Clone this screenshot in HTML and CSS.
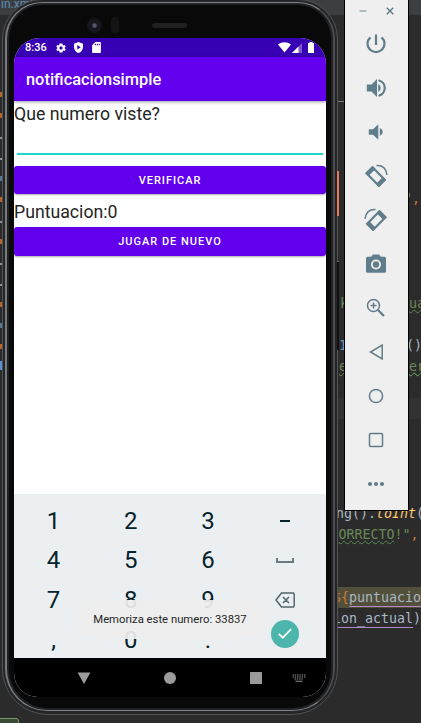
FILE: index.html
```html
<!DOCTYPE html>
<html lang="es">
<head>
<meta charset="utf-8">
<title>Emulador</title>
<link rel="stylesheet" href="styles.css">
</head>
<body>
<main class="desktop">
  <section class="editor">
    <div class="tabs">in.xml</div>
    <div class="code">
      <div class="gutter">
        <i class="o"></i><i class="o"></i><i></i><i></i><i class="b"></i><i class="o"></i><i></i><i class="o"></i><i></i><i></i><i class="o"></i><i class="b"></i><i class="o"></i><i class="sel"></i>
      </div>
      <div class="lines">
        <div class="line l-a">_<b>Le</b></div>
        <div class="line"></div><div class="line"></div><div class="line"></div><div class="line"></div>
        <div class="line l-b"><span class="g">"</span><span class="o">,</span></div>
        <div class="line"></div><div class="line"></div><div class="line"></div><div class="line"></div>
        <div class="line l-c g">k<span class="far wavy">ua</span></div>
        <div class="line"></div>
        <div class="line l-d"><span class="b">1</span><span class="far-d">()</span></div>
        <div class="line l-e g wavy">e<span class="far-e wavy">ere</span></div>
        <div class="line"></div>
        <div class="line current"></div>
        <div class="line"></div><div class="line"></div><div class="line"></div><div class="line"></div>
        <div class="line l-f">ng().<em>toInt</em>(</div>
        <div class="line l-g"><span class="g wavy">ORRECTO</span><span class="g">!"</span><span class="o">,</span></div>
        <div class="line"></div><div class="line"></div>
        <div class="line l-h"><span class="o">${</span><u>puntuacio</u></div>
        <div class="line l-i"><u>ion_actual</u>)</div>
      </div>
    </div>
    <div class="badge"></div>
  </section>

  <section class="phone">
    <div class="side power"></div>
    <div class="side volume"></div>
    <div class="bezel">
      <div class="hardware"><span class="camera"></span><span class="sensor"></span><span class="speaker"></span></div>
      <div class="screen">
        <div class="status">
          <span class="time">8:36</span>
          <svg class="s-gear" viewBox="2 2 20 20"><path fill-rule="evenodd" d="M19.4 13a7.500 7.500 0 0 0 0-2l2.100-1.600-2-3.500-2.500 1a8 8 0 0 0-1.700-1L15 3.200H9L8.700 5.900a8 8 0 0 0-1.700 1l-2.500-1-2 3.500L4.600 11a7.500 7.500 0 0 0 0 2l-2.100 1.600 2 3.500 2.500-1a8 8 0 0 0 1.700 1l.3 2.700h6l.3-2.700a8 8 0 0 0 1.700-1l2.500 1 2-3.500zM12 15.300a3.300 3.300 0 1 1 0-6.600 3.300 3.300 0 0 1 0 6.600z"/></svg>
          <svg class="s-shield" viewBox="3 1 18 22"><path fill-rule="evenodd" d="M12 1 3 4.500V11c0 5.500 3.800 10.700 9 12 5.200-1.300 9-6.500 9-12V4.500zM9.500 7l7 4.500-7 4.500z"/></svg>
          <svg class="s-card" viewBox="4 2 16 20"><path fill-rule="evenodd" d="M18 2h-8L4 8v12c0 1.100.9 2 2 2h12c1.100 0 2-.9 2-2V4c0-1.100-.9-2-2-2zM9 5h2v3H9zm3.500 0h2v3h-2zM16 5h2v3h-2z"/></svg>
          <span class="grow"></span>
          <svg class="s-wifi" viewBox="0 0 13 11"><path d="M0 2.500C4 -.6 9 -.6 13 2.500L6.500 10.500z"/></svg>
          <svg class="s-cell" viewBox="0 0 10 10"><path opacity=".35" d="M0 10 10 0v10z"/><path d="M0 10 6.500 3.500V10z"/></svg>
          <svg class="s-batt" viewBox="0 0 6 11"><path d="M1.500 0h3v1H6v10H0V1h1.500z"/></svg>
        </div>
        <header class="appbar">notificacionsimple</header>
        <div class="content">
          <div class="label">Que numero viste?</div>
          <div class="field"></div>
          <div class="btn">VERIFICAR</div>
          <div class="label second">Puntuacion:0</div>
          <div class="btn">JUGAR DE NUEVO</div>
        </div>
        <div class="keyboard">
          <span>1</span><span>2</span><span>3</span><span><i class="minus"></i></span>
          <span>4</span><span>5</span><span>6</span><span><i class="space"></i></span>
          <span>7</span><span>8</span><span>9</span>
          <span><svg class="back" viewBox="0 0 20 16"><path d="M6.500 1H18q1.200 0 1.200 1.200v11.600Q19.200 15 18 15H6.500L1 8zM8 5l6 6M14 5l-6 6"/></svg></span>
          <span>,</span><span>0</span><span>.</span>
          <span><i class="ok"><svg viewBox="0 0 14 11"><path d="M.8 5.800 4.800 9.700 13.200 1"/></svg></i></span>
          <div class="toast">Memoriza este numero: 33837</div>
        </div>
        <nav class="nav">
          <svg viewBox="0 0 14 14"><path d="M.5 1.500h13L7 13z"/></svg>
          <svg viewBox="0 0 14 14"><circle cx="7" cy="7" r="6"/></svg>
          <svg viewBox="0 0 14 14"><rect x="1" y="1" width="12" height="12" rx=".6"/></svg>
          <svg class="kbd" viewBox="0 0 14 8"><path d="M.5 1h13M.5 3h13M2.500 5h9" stroke-dasharray="1.400 .9"/><path d="M3.500 7.200h7"/></svg>
        </nav>
      </div>
    </div>
  </section>

  <aside class="toolbar">
    <div class="window">
      <svg viewBox="0 0 8 8"><path class="dim" d="M.5 4h7"/></svg>
      <svg viewBox="0 0 8 8"><path d="M.8.8l6.400 6.400M7.200.8.8 7.200"/></svg>
    </div>
    <div class="tool"><svg viewBox="0 0 24 24"><path class="st w2" d="M12 2.500v10.500M17.600 5.300a8.500 8.500 0 1 1-11.200 0"/></svg></div>
    <div class="tool"><svg viewBox="0 0 24 24"><path d="M2.800 8.500h4.700L13 3v18l-5.500-5.500H2.800zM14.200 8q2.500 1.500 2.500 4t-2.500 4z"/><path class="st w2" d="M14.500 4.200a8 8 0 0 1 0 15.600"/></svg></div>
    <div class="tool"><svg viewBox="0 0 24 24"><path d="M4.800 9.200H9l5.300-5v15.600l-5.300-5H4.800zM15.800 8q3 1.500 3 4t-3 4z"/></svg></div>
    <div class="tool"><svg viewBox="0 0 24 24"><g id="rotate"><path class="st w2" d="M8.500 3.200 20.800 15.800 14.800 21.800 2.500 9.200z"/><path d="m8.500 2 3 3L5 11.500 1.600 9zM18.300 13.500l3.500 2.700-6.800 6.800-3-3z"/><path class="st w1" d="M12.500 1.600q9.300-.5 10.500 9.300"/></g></svg></div>
    <div class="tool"><svg viewBox="0 0 24 24"><use href="#rotate" transform="matrix(-1 0 0 1 24 0)"/></svg></div>
    <div class="tool"><svg viewBox="0 0 24 24"><path fill-rule="evenodd" d="M9 2.500h6l2 2.300h3.500q1.500 0 1.500 1.500v13q0 1.500-1.500 1.500h-17Q2 20.800 2 19.300v-13q0-1.500 1.500-1.500H7zM12 7.500a5 5 0 1 0 0 10 5 5 0 0 0 0-10z"/><circle cx="12" cy="12.500" r="3.200"/></svg></div>
    <div class="tool"><svg viewBox="0 0 24 24"><circle class="st w1" cx="9.500" cy="9.500" r="6"/><path class="st w1" d="M9.500 6.500v6M6.500 9.500h6"/><path class="st w2" d="m14 14 6 6"/></svg></div>
    <div class="tool"><svg viewBox="0 0 24 24"><path class="st w1" d="M18.200 5v14L6.500 12z"/></svg></div>
    <div class="tool"><svg viewBox="0 0 24 24"><circle class="st w1" cx="12" cy="12" r="6.600"/></svg></div>
    <div class="tool"><svg viewBox="0 0 24 24"><rect class="st w1" x="5.500" y="5.500" width="13" height="13" rx="1"/></svg></div>
    <div class="tool"><svg viewBox="0 0 24 24"><circle cx="6" cy="12" r="2.100"/><circle cx="12" cy="12" r="2.100"/><circle cx="18" cy="12" r="2.100"/></svg></div>
  </aside>
</main>
</body>
</html>
```
FILE: styles.css
```css
* { box-sizing: border-box; }
body { margin: 0; background: #2b2b2b; font-family: Roboto, sans-serif; }
.desktop { position: relative; width: 421px; height: 723px; overflow: hidden; }

.editor {
  position: absolute; inset: 0; background: #2b2b2b; color: #a9b7c6;
  font: 13.3px/21px "DejaVu Sans Mono", monospace; overflow: hidden;
}
.tabs { height: 15px; line-height: 8px; padding-left: 1px; background: #3c3f41; color: #5e8cb5; font-family: Roboto, sans-serif; font-size: 12px; }
.code { display: flex; padding-top: 68px; }
.gutter { width: 2px; flex: none; display: flex; flex-direction: column; padding-top: 5px; }
.gutter i { height: 9px; margin-bottom: 12px; flex: none; border-bottom: 2px dotted #8b93a0; }
.gutter .o { border-bottom: 5px solid #b5652c; }
.gutter .b { border-bottom: 5px solid #54789a; }
.gutter .sel { background: #5a8fd0; border: 0; }
.lines { flex: 1; overflow: hidden; }
.line { height: 21px; white-space: pre; }
.line b { font-weight: normal; color: #6e9ac0; }
.line em { color: #ffc66d; }
.line u { text-decoration-color: #b389c5; text-underline-offset: 4px; }
.line .g, .g { color: #6a8759; }
.line .o { color: #cc7832; }
.line .b { color: #6897bb; }
.wavy { text-decoration: underline wavy #5a8a55 1px; }
.current { background: #323232; }
.l-a { padding-left: 334px; }
.l-b { padding-left: 402px; }
.l-c { padding-left: 338px; }
.far { margin-left: 61px; }
.l-d { padding-left: 337px; }
.far-d { margin-left: 59px; }
.l-e { padding-left: 337px; }
.far-e { margin-left: 62px; }
.l-f { padding-left: 334px; }
.l-g { padding-left: 336.500px; }
.l-h { padding-left: 331px; background: #52503a; }
.l-i { padding-left: 331px; }
.badge { position: absolute; left: -4px; top: 718px; width: 23px; height: 12px; border: 1px solid #7a9a6a; border-radius: 3px; background: #3a4a35; }

.phone {
  position: absolute; left: 2px; top: -1px; width: 336px; height: 716px; padding: 2px;
  border: 1px solid #505254; border-radius: 40px 40px 46px 46px; background: #242527;
}
.bezel {
  height: 709px; padding: 36px 7px 0 8px; border: 1px solid #808286;
  border-left: 2px solid #77797c; border-right: 2px solid #4a4c4f;
  border-radius: 37px 37px 42px 42px; background: #09090a;
  box-shadow: inset 0 0 0 2px #202123;
}
.bezel { padding-left: 7px; }
.side { position: absolute; left: 334px; width: 2px; }
.power { top: 171px; height: 45px; background: #e8745a; }
.volume { top: 261px; height: 89px; background: #111; border-top: 1px solid #666; }
.hardware { display: flex; align-items: center; height: 16px; margin: -22px 0 5px 73px; }
.camera { width: 15px; height: 15px; border-radius: 50%; background: radial-gradient(circle, #53566c 0 1.500px, #171722 3px 5px, #151515 6px); }
.sensor { width: 8px; height: 16px; margin-left: 9px; border-radius: 4px; background: #141415; }
.speaker { width: 35px; height: 5px; margin-left: 33px; border-radius: 3px; background: #202021; }
.screen { width: 312px; height: 659px; border-radius: 26px 26px 24px 24px; overflow: hidden; background: #fff; display: flex; flex-direction: column; }
.status { height: 19px; flex: none; background: #3700b3; color: #fff; display: flex; align-items: center; padding: 0 12px 0 11px; }
.status svg { fill: #fff; display: block; }
.time { font-size: 11px; font-weight: 500; width: 31px; }
.s-gear { width: 10px; height: 10px; }
.s-shield { width: 9px; height: 11px; margin-left: 8px; }
.s-card { width: 9px; height: 11px; margin-left: 9px; }
.grow { flex: 1; }
.s-wifi { width: 13px; height: 11px; }
.s-cell { width: 10px; height: 10px; margin-left: 1px; }
.s-batt { width: 6px; height: 11px; margin-left: 6px; }
.appbar { height: 44px; flex: none; background: #6200ee; color: #fff; font-weight: 500; font-size: 16.400px; line-height: 45px; padding-left: 12px; box-shadow: 0 1px 3px #0006; z-index: 1; }
.content { flex: 1; }
.label { font-size: 17.700px; line-height: 26px; color: #252525; }
.field { height: 28px; margin: 0 3px 10.500px; border-bottom: 2px solid #1bd9ca; }
.btn { height: 28.500px; border-radius: 3px; background: #6200ee; color: #fff; font-weight: 500; font-size: 11px; line-height: 29px; letter-spacing: .98px; text-align: center; box-shadow: 0 1px 2px #0005; }
.second { padding-top: 5px; height: 33px; }
.keyboard { position: relative; height: 164px; flex: none; background: #eceff1; display: grid; grid-template-columns: repeat(4, 77.200px); grid-template-rows: repeat(4, 39.600px); padding: 7px 0 0 1px; color: #06222b; font-size: 24px; }
.keyboard span { display: flex; align-items: center; justify-content: center; }
.keyboard span:nth-child(4n) { padding-right: 1px; }
.keyboard span:nth-child(16) { align-items: flex-start; }
.minus { width: 10px; height: 2px; background: #06222b; }
.space { width: 18px; height: 5px; border: 2px solid #6a7a80; border-top: 0; }
.back { width: 20px; height: 16px; fill: none; stroke: #52646c; stroke-width: 1.500; }
.ok { width: 28px; height: 28px; border-radius: 50%; background: #4db6ac; display: flex; align-items: center; justify-content: center; }
.ok svg { width: 14px; height: 11px; fill: none; stroke: #fff; stroke-width: 1.700; }
.toast { position: absolute; left: 61px; top: 106px; width: 190px; height: 39px; border-radius: 19px; background: #eeeeeeed; color: #252525; font-size: 11.300px; line-height: 40px; text-align: center; white-space: nowrap; }
.nav { height: 39px; flex: none; background: #000; display: flex; align-items: center; padding-left: 63px; gap: 72px; }
.nav svg { width: 14px; height: 14px; fill: #9b9b9b; flex: none; }
.nav .kbd { height: 8px; margin-left: -43px; fill: none; stroke: #999; stroke-width: 1.100; }

.toolbar { position: absolute; left: 344px; top: 0; width: 65px; height: 511px; background: #efefef; border: solid #000; border-width: 0 1px 1px; }
.window { display: flex; height: 22px; padding: 0 14px; justify-content: space-between; align-items: center; }
.window svg { width: 8px; height: 8px; fill: none; stroke: #587580; stroke-width: 1.300; }
.window .dim { stroke: #8fa4ad; }
.tool { height: 44px; display: flex; align-items: center; justify-content: center; padding-right: 1px; }
.tool svg { width: 24px; height: 24px; fill: #607d8b; }
.st { fill: none; stroke: #607d8b; }
.w1 { stroke-width: 1.500; }
.w2 { stroke-width: 2.200; }
```
